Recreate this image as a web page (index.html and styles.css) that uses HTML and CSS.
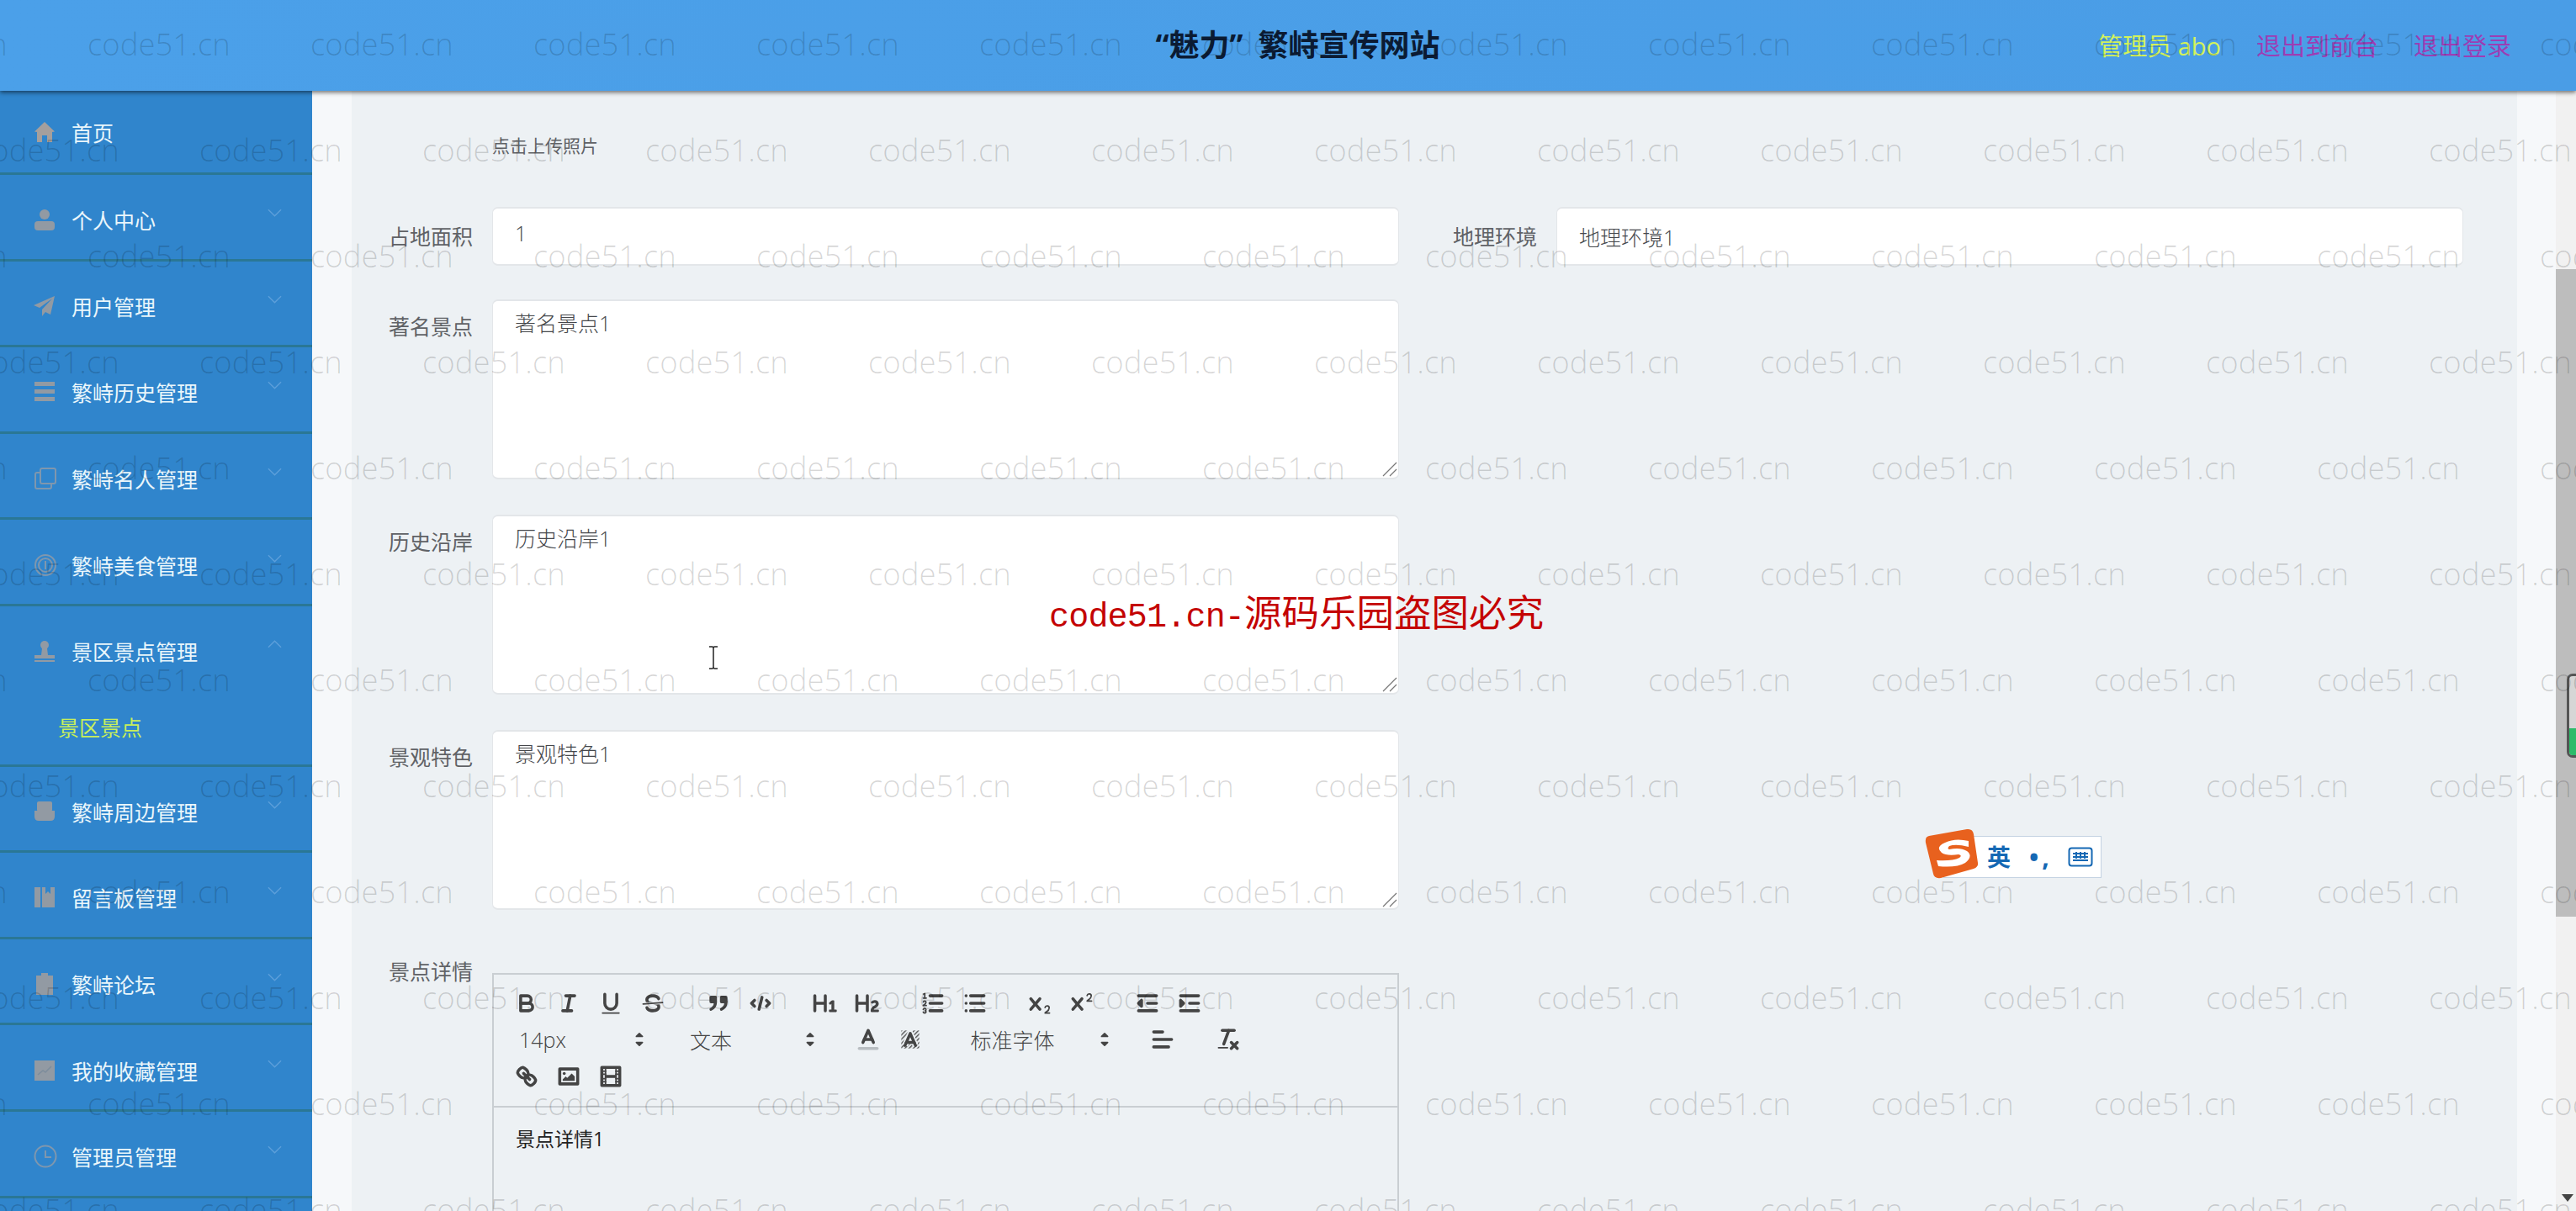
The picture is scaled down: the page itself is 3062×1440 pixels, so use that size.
FILE: index.html
```html
<!DOCTYPE html>
<html lang="zh-CN">
<head>
<meta charset="utf-8">
<title>“魅力”繁峙宣传网站</title>
<link rel="stylesheet" href="styles.css">
</head>
<body>
<div class="app">
  <header class="topbar">
    <div></div>
    <h1 class="site-title">“魅力<span class="title-quote">”</span>繁峙宣传网站</h1>
    <nav class="top-links">
      <span class="user-name">管理员 abo</span>
      <a class="top-link">退出到前台</a>
      <a class="top-link">退出登录</a>
    </nav>
  </header>
  <div class="shell">
    <aside class="sidebar">
      <ul class="menu">
        <li class="menu-item menu-item-first"><div class="menu-title">
          <svg class="nav-icon nav-icon-warm" viewBox="0 0 26 26"><path d="M13 1 25 12.500 22 13V25H16V17H10V25H4V13L1 12.500Z"/></svg><span>首页</span></div></li>
        <li class="menu-item"><div class="menu-title">
          <svg class="nav-icon" viewBox="0 0 26 26"><circle cx="13" cy="7" r="6"/><rect x="1" y="15" width="24" height="11" rx="4"/></svg><span>个人中心</span>
          <svg class="chevron" viewBox="0 0 18 10"><path d="M1 1 9 9 17 1"/></svg></div></li>
        <li class="menu-item"><div class="menu-title">
          <svg class="nav-icon" viewBox="0 0 26 26"><path d="M25 1 0 12 7 15 22 4 10 17V25L14 20 20 23Z"/></svg><span>用户管理</span>
          <svg class="chevron" viewBox="0 0 18 10"><path d="M1 1 9 9 17 1"/></svg></div></li>
        <li class="menu-item"><div class="menu-title">
          <svg class="nav-icon" viewBox="0 0 26 26"><rect x="1" y="1" width="24" height="5"/><rect x="1" y="10" width="24" height="5"/><rect x="1" y="19" width="24" height="5"/></svg><span>繁峙历史管理</span>
          <svg class="chevron" viewBox="0 0 18 10"><path d="M1 1 9 9 17 1"/></svg></div></li>
        <li class="menu-item"><div class="menu-title">
          <svg class="nav-icon nav-icon-line" viewBox="0 0 28 28"><rect x="8" y="2" width="18" height="18" rx="2"/><path d="M8 7H4Q2 7 2 9V24Q2 26 4 26H19Q21 26 21 24V20"/></svg><span>繁峙名人管理</span>
          <svg class="chevron" viewBox="0 0 18 10"><path d="M1 1 9 9 17 1"/></svg></div></li>
        <li class="menu-item"><div class="menu-title">
          <svg class="nav-icon nav-icon-line" viewBox="0 0 28 28"><circle cx="14" cy="14" r="12"/><circle cx="14" cy="14" r="8"/><path d="M14 9V19"/></svg><span>繁峙美食管理</span>
          <svg class="chevron" viewBox="0 0 18 10"><path d="M1 1 9 9 17 1"/></svg></div></li>
        <li class="menu-item menu-item-open"><div class="menu-title">
          <svg class="nav-icon" viewBox="0 0 26 26"><circle cx="13" cy="6" r="5"/><path d="M10 10H16L17 18H25V22H1V18H9Z"/><rect x="1" y="24" width="24" height="2"/></svg><span>景区景点管理</span>
          <svg class="chevron" viewBox="0 0 18 10"><path d="M1 9 9 1 17 9"/></svg></div>
          <div class="submenu-item">景区景点</div></li>
        <li class="menu-item"><div class="menu-title">
          <svg class="nav-icon" viewBox="0 0 26 26"><rect x="4" y="1" width="18" height="12" rx="2"/><path d="M1 12H25V19Q25 24 20 24H6Q1 24 1 19Z"/></svg><span>繁峙周边管理</span>
          <svg class="chevron" viewBox="0 0 18 10"><path d="M1 1 9 9 17 1"/></svg></div></li>
        <li class="menu-item"><div class="menu-title">
          <svg class="nav-icon" viewBox="0 0 26 26"><rect x="1" y="1" width="7" height="24"/><path d="M10 1H14V9L17 6 20 9V1H25V25H10Z"/></svg><span>留言板管理</span>
          <svg class="chevron" viewBox="0 0 18 10"><path d="M1 1 9 9 17 1"/></svg></div></li>
        <li class="menu-item"><div class="menu-title">
          <svg class="nav-icon" viewBox="0 0 26 26"><path d="M9 0H17V3H23V26H3V3H9Z"/></svg><span>繁峙论坛</span>
          <svg class="chevron" viewBox="0 0 18 10"><path d="M1 1 9 9 17 1"/></svg></div></li>
        <li class="menu-item"><div class="menu-title">
          <svg class="nav-icon" viewBox="0 0 26 26"><rect x="1" y="1" width="24" height="24"/><path class="nav-icon-cut" d="M5 18 11 13 14 15 21 8"/></svg><span>我的收藏管理</span>
          <svg class="chevron" viewBox="0 0 18 10"><path d="M1 1 9 9 17 1"/></svg></div></li>
        <li class="menu-item"><div class="menu-title">
          <svg class="nav-icon nav-icon-line" viewBox="0 0 28 28"><circle cx="14" cy="14" r="12.500"/><path d="M14 7V15H21"/></svg><span>管理员管理</span>
          <svg class="chevron" viewBox="0 0 18 10"><path d="M1 1 9 9 17 1"/></svg></div></li>
      </ul>
    </aside>
    <div class="strip"></div>
    <main class="content">
      <div class="upload-row"><span class="upload-text">点击上传照片</span></div>
      <form class="form">
        <div class="field field-input">
          <label class="field-label">占地面积</label>
          <input class="control control-first" value="1">
        </div>
        <div class="field field-input">
          <label class="field-label">地理环境</label>
          <input class="control" value="地理环境1">
        </div>
        <div class="field field-area">
          <label class="field-label">著名景点</label>
          <div class="area-wrap">
            <textarea class="control area">著名景点1</textarea>
            <svg class="grip" viewBox="0 0 18 18"><path d="M1 17 17 1M9 17 17 9"/></svg>
          </div>
        </div>
        <div class="field field-area field-second">
          <label class="field-label">历史沿岸</label>
          <div class="area-wrap">
            <textarea class="control area">历史沿岸1</textarea>
            <svg class="grip" viewBox="0 0 18 18"><path d="M1 17 17 1M9 17 17 9"/></svg>
          </div>
        </div>
        <div class="field field-area field-second">
          <label class="field-label">景观特色</label>
          <div class="area-wrap">
            <textarea class="control area">景观特色1</textarea>
            <svg class="grip" viewBox="0 0 18 18"><path d="M1 17 17 1M9 17 17 9"/></svg>
          </div>
        </div>
        <div class="field field-editor">
          <label class="field-label field-label-editor">景点详情</label>
          <div class="editor">
            <div class="toolbar">
              <div class="tb-row">
              <span class="tb-group">
                <span class="tb-btn"><svg viewBox="0 0 18 18"><path class="ql-stroke" d="M5,4H9.500A2.500,2.500,0,0,1,12,6.500v0A2.500,2.500,0,0,1,9.500,9H5A0,0,0,0,1,5,9V4A0,0,0,0,1,5,4Z"/><path class="ql-stroke" d="M5,9h5.500A2.500,2.500,0,0,1,13,11.500v0A2.500,2.500,0,0,1,10.500,14H5a0,0,0,0,1,0,0V9A0,0,0,0,1,5,9Z"/></svg></span>
                <span class="tb-btn"><svg viewBox="0 0 18 18"><line class="ql-stroke" x1="7" x2="13" y1="4" y2="4"/><line class="ql-stroke" x1="5" x2="11" y1="14" y2="14"/><line class="ql-stroke" x1="8" x2="10" y1="14" y2="4"/></svg></span>
                <span class="tb-btn"><svg viewBox="0 0 18 18"><path class="ql-stroke" d="M5,3V9a4.012,4.012,0,0,0,4,4H9a4.012,4.012,0,0,0,4-4V3"/><rect class="ql-fill" height="1" rx=".5" ry=".5" width="12" x="3" y="15"/></svg></span>
                <span class="tb-btn"><svg viewBox="0 0 18 18"><line class="ql-stroke ql-thin" x1="15.500" x2="2.500" y1="8.500" y2="9.500"/><path class="ql-fill" d="M9.007,8C6.542,7.791,6,7.519,6,6.500,6,5.792,7.283,5,9,5c1.571,0,2.765.679,2.969,1.309a1,1,0,0,0,1.900-.617C13.356,4.106,11.354,3,9,3,6.200,3,4,4.538,4,6.500a3.200,3.200,0,0,0,.5,1.843Z"/><path class="ql-fill" d="M8.984,10C11.457,10.208,12,10.479,12,11.500c0,.708-1.283,1.500-3,1.500-1.571,0-2.765-.679-2.969-1.309a1,1,0,1,0-1.900.617C4.644,13.894,6.646,15,9,15c2.800,0,5-1.538,5-3.500a3.200,3.200,0,0,0-.5-1.843Z"/></svg></span>
              </span>
              <span class="tb-group">
                <span class="tb-btn"><svg viewBox="0 0 18 18"><rect class="ql-fill ql-stroke" height="3" width="3" x="4" y="5"/><rect class="ql-fill ql-stroke" height="3" width="3" x="11" y="5"/><path class="ql-stroke" d="M7,8c0,4.031-3,5-3,5"/><path class="ql-stroke" d="M14,8c0,4.031-3,5-3,5"/></svg></span>
                <span class="tb-btn"><svg viewBox="0 0 18 18"><polyline class="ql-stroke" points="5 7 3 9 5 11"/><polyline class="ql-stroke" points="13 7 15 9 13 11"/><line class="ql-stroke" x1="10" x2="8" y1="5" y2="13"/></svg></span>
              </span>
              <span class="tb-group">
                <span class="tb-btn"><svg viewBox="0 0 18 18"><path class="ql-fill" d="M10,4V14a1,1,0,0,1-2,0V10H3v4a1,1,0,0,1-2,0V4A1,1,0,0,1,3,4V8H8V4a1,1,0,0,1,2,0Zm6.06787,9.209H14.98975V7.59863a.54085.54085,0,0,0-.605-.60547h-.62744a1.01119,1.01119,0,0,0-.748.29688L11.645,8.56641a.5435.5435,0,0,0-.022.8584l.28613.30762a.53861.53861,0,0,0,.84717.0332l.09912-.08789a1.2137,1.2137,0,0,0,.2417-.35254h.02246s-.01123.30859-.01123.60547V13.209H12.041a.54085.54085,0,0,0-.605.60547v.43945a.54085.54085,0,0,0,.605.60547h4.02686a.54085.54085,0,0,0,.605-.60547v-.43945A.54085.54085,0,0,0,16.06787,13.209Z"/></svg></span>
                <span class="tb-btn"><svg viewBox="0 0 18 18"><path class="ql-fill" d="M16.73975,13.81445v.43945a.54085.54085,0,0,1-.605.60547H11.855a.58392.58392,0,0,1-.64893-.60547V14.0127c0-2.90527,3.39941-3.42187,3.39941-4.55469a.77675.77675,0,0,0-.84717-.78125,1.17684,1.17684,0,0,0-.83594.38477c-.2749.26367-.561.374-.85791.13184l-.4292-.34082c-.30811-.24219-.38525-.51758-.1543-.81445a2.97155,2.97155,0,0,1,2.45361-1.17676,2.45393,2.45393,0,0,1,2.68408,2.40918c0,2.45312-3.1792,2.92676-3.27832,3.93848h2.79443A.54085.54085,0,0,1,16.73975,13.81445ZM9,3A.99974.99974,0,0,0,8,4V8H3V4A1,1,0,0,0,1,4V14a1,1,0,0,0,2,0V10H8v4a1,1,0,0,0,2,0V4A.99974.99974,0,0,0,9,3Z"/></svg></span>
              </span>
              <span class="tb-group">
                <span class="tb-btn"><svg viewBox="0 0 18 18"><line class="ql-stroke" x1="7" x2="15" y1="4" y2="4"/><line class="ql-stroke" x1="7" x2="15" y1="9" y2="9"/><line class="ql-stroke" x1="7" x2="15" y1="14" y2="14"/><line class="ql-stroke ql-thin" x1="2.500" x2="4.500" y1="5.500" y2="5.500"/><path class="ql-fill" d="M3.500,6A0.500,0.500,0,0,1,3,5.500V3.085l-0.276.138A0.500,0.500,0,0,1,2.053,3c-0.124-.247-0.023-0.324.224-0.447l1-.5A0.500,0.500,0,0,1,4,2.500v3A0.500,0.500,0,0,1,3.500,6Z"/><path class="ql-stroke ql-thin" d="M4.500,10.500h-2c0-.234,1.850-1.076,1.850-2.234A0.959,0.959,0,0,0,2.500,8.156"/><path class="ql-stroke ql-thin" d="M2.500,14.846a0.959,0.959,0,0,0,1.850-.109A0.700,0.700,0,0,0,3.750,14a0.688,0.688,0,0,0,.6-0.736,0.959,0.959,0,0,0-1.850-.109"/></svg></span>
                <span class="tb-btn"><svg viewBox="0 0 18 18"><line class="ql-stroke" x1="6" x2="15" y1="4" y2="4"/><line class="ql-stroke" x1="6" x2="15" y1="9" y2="9"/><line class="ql-stroke" x1="6" x2="15" y1="14" y2="14"/><line class="ql-stroke" x1="3" x2="3" y1="4" y2="4"/><line class="ql-stroke" x1="3" x2="3" y1="9" y2="9"/><line class="ql-stroke" x1="3" x2="3" y1="14" y2="14"/></svg></span>
              </span>
              <span class="tb-group">
                <span class="tb-btn"><svg viewBox="0 0 18 18"><path class="ql-fill" d="M15.500,15H13.861a3.858,3.858,0,0,0,1.914-2.975,1.800,1.800,0,0,0-1.600-1.751A1.921,1.921,0,0,0,12.021,11.700a0.50013,0.50013,0,1,0,.957.291h0a0.914,0.914,0,0,1,1.053-.725,0.810,0.810,0,0,1,.744.762c0,1.076-1.16971,1.86982-1.93971,2.43082A1.45639,1.45639,0,0,0,12,15.500a0.500,0.500,0,0,0,.5.5h3A0.500,0.500,0,0,0,15.500,15Z"/><path class="ql-fill" d="M9.650,5.241a1,1,0,0,0-1.409.108L6,7.964,3.759,5.349A1,1,0,0,0,2.192,6.59178Q2.21541,6.6213,2.241,6.649L4.684,9.500,2.241,12.350A1,1,0,0,0,3.710,13.70722q0.02557-.02768.049-0.05722L6,11.036,8.241,13.650a1,1,0,1,0,1.567-1.24277Q9.78459,12.3777,9.759,12.350L7.316,9.500,9.759,6.651A1,1,0,0,0,9.650,5.241Z"/></svg></span>
                <span class="tb-btn"><svg viewBox="0 0 18 18"><path class="ql-fill" d="M15.500,7H13.861a4.015,4.015,0,0,0,1.914-2.975,1.800,1.800,0,0,0-1.600-1.751A1.922,1.922,0,0,0,12.021,3.700a0.500,0.500,0,1,0,.957.291,0.917,0.917,0,0,1,1.053-.725,0.810,0.810,0,0,1,.744.762c0,1.077-1.164,1.925-1.934,2.486A1.423,1.423,0,0,0,12,7.500a0.500,0.500,0,0,0,.5.5h3A0.500,0.500,0,0,0,15.500,7Z"/><path class="ql-fill" d="M9.650,5.241a1,1,0,0,0-1.409.108L6,7.964,3.759,5.349A1,1,0,0,0,2.192,6.59178Q2.21541,6.6213,2.241,6.649L4.684,9.500,2.241,12.350A1,1,0,0,0,3.710,13.70722q0.02557-.02768.049-0.05722L6,11.036,8.241,13.650a1,1,0,1,0,1.567-1.24277Q9.78459,12.3777,9.759,12.350L7.316,9.500,9.759,6.651A1,1,0,0,0,9.650,5.241Z"/></svg></span>
              </span>
              <span class="tb-group">
                <span class="tb-btn"><svg viewBox="0 0 18 18"><line class="ql-stroke" x1="3" x2="15" y1="14" y2="14"/><line class="ql-stroke" x1="3" x2="15" y1="4" y2="4"/><line class="ql-stroke" x1="9" x2="15" y1="9" y2="9"/><polyline class="ql-fill ql-stroke" points="5 7 5 11 3 9 5 7"/></svg></span>
                <span class="tb-btn"><svg viewBox="0 0 18 18"><line class="ql-stroke" x1="3" x2="15" y1="14" y2="14"/><line class="ql-stroke" x1="3" x2="15" y1="4" y2="4"/><line class="ql-stroke" x1="9" x2="15" y1="9" y2="9"/><polyline class="ql-fill ql-stroke" points="3 7 3 11 5 9 3 7"/></svg></span>
              </span>
              </div>
              <div class="tb-row">
              <span class="tb-picker tb-picker-size"><span>14px</span><svg viewBox="0 0 18 18"><polygon class="ql-fill ql-stroke-thin" points="7 11 9 13 11 11 7 11"/><polygon class="ql-fill ql-stroke-thin" points="7 7 9 5 11 7 7 7"/></svg></span>
              <span class="tb-picker tb-picker-size"><span>文本</span><svg viewBox="0 0 18 18"><polygon class="ql-fill ql-stroke-thin" points="7 11 9 13 11 11 7 11"/><polygon class="ql-fill ql-stroke-thin" points="7 7 9 5 11 7 7 7"/></svg></span>
              <span class="tb-group">
                <span class="tb-btn"><svg viewBox="0 0 18 18"><line class="ql-stroke ql-label" x1="3" x2="15" y1="15" y2="15"/><polyline class="ql-stroke" points="5.500 11 9 3 12.500 11"/><line class="ql-stroke" x1="11.630" x2="6.380" y1="9" y2="9"/></svg></span>
                <span class="tb-btn"><svg viewBox="0 0 18 18"><defs><pattern id="hatch" width="2" height="2" patternUnits="userSpaceOnUse" patternTransform="rotate(45)"><rect class="hatch-line" width=".8" height="2"/></pattern></defs><rect x="3" y="3" width="12" height="12" fill="url(#hatch)"/><polyline class="ql-halo" points="5.500 13 9 5 12.500 13"/><polyline class="ql-stroke" points="5.500 13 9 5 12.500 13"/><line class="ql-stroke" x1="11.630" x2="6.380" y1="11" y2="11"/></svg></span>
              </span>
              <span class="tb-picker tb-picker-font"><span>标准字体</span><svg viewBox="0 0 18 18"><polygon class="ql-fill ql-stroke-thin" points="7 11 9 13 11 11 7 11"/><polygon class="ql-fill ql-stroke-thin" points="7 7 9 5 11 7 7 7"/></svg></span>
              <span class="tb-group">
                <span class="tb-btn"><svg viewBox="0 0 18 18"><line class="ql-stroke" x1="3" x2="15" y1="9" y2="9"/><line class="ql-stroke" x1="3" x2="13" y1="14" y2="14"/><line class="ql-stroke" x1="3" x2="9" y1="4" y2="4"/></svg></span>
              </span>
              <span class="tb-group">
                <span class="tb-btn"><svg viewBox="0 0 18 18"><line class="ql-stroke" x1="5" x2="13" y1="3" y2="3"/><line class="ql-stroke" x1="6" x2="9.350" y1="12" y2="3"/><line class="ql-stroke" x1="11" x2="15" y1="11" y2="15"/><line class="ql-stroke" x1="15" x2="11" y1="11" y2="15"/><rect class="ql-fill" height="1" rx=".5" ry=".5" width="7" x="2" y="14"/></svg></span>
              </span>
              </div>
              <div class="tb-row">
              <span class="tb-group">
                <span class="tb-btn"><svg viewBox="0 0 18 18"><line class="ql-stroke" x1="7" x2="11" y1="7" y2="11"/><path class="ql-stroke" d="M8.900,4.577a3.476,3.476,0,0,1,.36,4.679A3.476,3.476,0,0,1,4.577,8.900C3.185,7.500,2.035,6.400,4.217,4.217S7.500,3.185,8.900,4.577Z"/><path class="ql-stroke" d="M13.423,9.100a3.476,3.476,0,0,0-4.679-.36,3.476,3.476,0,0,0,.36,4.679c1.392,1.392,2.500,2.542,4.679.36S14.815,10.500,13.423,9.100Z"/></svg></span>
                <span class="tb-btn"><svg viewBox="0 0 18 18"><rect class="ql-stroke" height="10" width="12" x="3" y="4"/><circle class="ql-fill" cx="6" cy="7" r="1"/><polyline class="ql-fill" points="5 12 5 11 7 9 8 10 11 7 13 9 13 12 5 12"/></svg></span>
                <span class="tb-btn"><svg viewBox="0 0 18 18"><rect class="ql-stroke" height="12" width="12" x="3" y="3"/><rect class="ql-fill" height="12" width="1" x="5" y="3"/><rect class="ql-fill" height="12" width="1" x="12" y="3"/><rect class="ql-fill" height="2" width="8" x="5" y="8"/><rect class="ql-fill" height="1" width="3" x="3" y="5"/><rect class="ql-fill" height="1" width="3" x="3" y="7"/><rect class="ql-fill" height="1" width="3" x="3" y="10"/><rect class="ql-fill" height="1" width="3" x="3" y="12"/><rect class="ql-fill" height="1" width="3" x="12" y="5"/><rect class="ql-fill" height="1" width="3" x="12" y="7"/><rect class="ql-fill" height="1" width="3" x="12" y="10"/><rect class="ql-fill" height="1" width="3" x="12" y="12"/></svg></span>
              </span>
              </div>
            </div>
            <div class="editor-body">景点详情1</div>
          </div>
        </div>
      </form>
    </main>
    <div class="strip strip-right"></div>
    <div class="scrollbar">
      <div class="scroll-thumb">
        <div class="battery"><div class="battery-fill"></div></div>
      </div>
      <svg class="scroll-arrow" viewBox="0 0 14 9"><path d="M0 0H14L7 9Z"/></svg>
    </div>
  </div>
</div>

<div class="watermarks">
  <div class="wm-row wm-row-a"><span>code51.cn</span><span>code51.cn</span><span>code51.cn</span><span>code51.cn</span><span>code51.cn</span><span>code51.cn</span><span>code51.cn</span><span>code51.cn</span><span>code51.cn</span><span>code51.cn</span><span>code51.cn</span><span>code51.cn</span><span>code51.cn</span></div>
  <div class="wm-row wm-row-b"><span>code51.cn</span><span>code51.cn</span><span>code51.cn</span><span>code51.cn</span><span>code51.cn</span><span>code51.cn</span><span>code51.cn</span><span>code51.cn</span><span>code51.cn</span><span>code51.cn</span><span>code51.cn</span><span>code51.cn</span><span>code51.cn</span></div>
  <div class="wm-row wm-row-a"><span>code51.cn</span><span>code51.cn</span><span>code51.cn</span><span>code51.cn</span><span>code51.cn</span><span>code51.cn</span><span>code51.cn</span><span>code51.cn</span><span>code51.cn</span><span>code51.cn</span><span>code51.cn</span><span>code51.cn</span><span>code51.cn</span></div>
  <div class="wm-row wm-row-b"><span>code51.cn</span><span>code51.cn</span><span>code51.cn</span><span>code51.cn</span><span>code51.cn</span><span>code51.cn</span><span>code51.cn</span><span>code51.cn</span><span>code51.cn</span><span>code51.cn</span><span>code51.cn</span><span>code51.cn</span><span>code51.cn</span></div>
  <div class="wm-row wm-row-a"><span>code51.cn</span><span>code51.cn</span><span>code51.cn</span><span>code51.cn</span><span>code51.cn</span><span>code51.cn</span><span>code51.cn</span><span>code51.cn</span><span>code51.cn</span><span>code51.cn</span><span>code51.cn</span><span>code51.cn</span><span>code51.cn</span></div>
  <div class="wm-row wm-row-b"><span>code51.cn</span><span>code51.cn</span><span>code51.cn</span><span>code51.cn</span><span>code51.cn</span><span>code51.cn</span><span>code51.cn</span><span>code51.cn</span><span>code51.cn</span><span>code51.cn</span><span>code51.cn</span><span>code51.cn</span><span>code51.cn</span></div>
  <div class="wm-row wm-row-a"><span>code51.cn</span><span>code51.cn</span><span>code51.cn</span><span>code51.cn</span><span>code51.cn</span><span>code51.cn</span><span>code51.cn</span><span>code51.cn</span><span>code51.cn</span><span>code51.cn</span><span>code51.cn</span><span>code51.cn</span><span>code51.cn</span></div>
  <div class="wm-row wm-row-b"><span>code51.cn</span><span>code51.cn</span><span>code51.cn</span><span>code51.cn</span><span>code51.cn</span><span>code51.cn</span><span>code51.cn</span><span>code51.cn</span><span>code51.cn</span><span>code51.cn</span><span>code51.cn</span><span>code51.cn</span><span>code51.cn</span></div>
  <div class="wm-row wm-row-a"><span>code51.cn</span><span>code51.cn</span><span>code51.cn</span><span>code51.cn</span><span>code51.cn</span><span>code51.cn</span><span>code51.cn</span><span>code51.cn</span><span>code51.cn</span><span>code51.cn</span><span>code51.cn</span><span>code51.cn</span><span>code51.cn</span></div>
  <div class="wm-row wm-row-b"><span>code51.cn</span><span>code51.cn</span><span>code51.cn</span><span>code51.cn</span><span>code51.cn</span><span>code51.cn</span><span>code51.cn</span><span>code51.cn</span><span>code51.cn</span><span>code51.cn</span><span>code51.cn</span><span>code51.cn</span><span>code51.cn</span></div>
  <div class="wm-row wm-row-a"><span>code51.cn</span><span>code51.cn</span><span>code51.cn</span><span>code51.cn</span><span>code51.cn</span><span>code51.cn</span><span>code51.cn</span><span>code51.cn</span><span>code51.cn</span><span>code51.cn</span><span>code51.cn</span><span>code51.cn</span><span>code51.cn</span></div>
  <div class="wm-row wm-row-b"><span>code51.cn</span><span>code51.cn</span><span>code51.cn</span><span>code51.cn</span><span>code51.cn</span><span>code51.cn</span><span>code51.cn</span><span>code51.cn</span><span>code51.cn</span><span>code51.cn</span><span>code51.cn</span><span>code51.cn</span><span>code51.cn</span></div>
</div>

<div class="stamp"><span class="stamp-latin">code51.cn-</span>源码乐园盗图必究</div>

<svg class="ibeam" viewBox="0 0 12 28"><path d="M1 1H4.500Q6 1 6 3V25Q6 27 4.500 27H1M11 1H7.500Q6 1 6 3M6 25Q6 27 7.500 27H11"/></svg>

<div class="ime">
  <svg class="ime-logo" viewBox="0 0 64 60"><path class="ime-logo-box" d="M5 9 50 1Q57 0 58 7L63 41Q64 46 58 48L19 59Q11 60 10 54L1 17Q0 10 5 9Z"/><path class="ime-logo-s" d="M52 15Q36 11 24 17 12 22 20 29 26 33 40 31 45 32 41 35 33 39 14 38L16 45Q38 47 48 41 58 33 50 27 42 22 29 25 26 24 29 21 37 18 52 22Z"/></svg>
  <span class="ime-text">英</span>
  <span class="ime-punct">•,</span>
  <svg class="ime-keys" viewBox="0 0 30 24"><rect x="1.500" y="1.500" width="27" height="21" rx="3"/><path d="M6 8H24M6 12H24M6 16H24M10 6V14M15 6V14M20 6V14"/></svg>
</div>
</body>
</html>
```
FILE: styles.css
```css
* { box-sizing: border-box; }
html, body { margin: 0; height: 100%; overflow: hidden; }
body {
  font-family: "Open Sans", "Noto Sans CJK SC", sans-serif;
  color: #606266;
  background: #edf1f4;
}
.app { display: flex; flex-direction: column; height: 1440px; }

/* top bar */
.topbar {
  position: relative;
  z-index: 3;
  flex: none;
  height: 108px;
  display: grid;
  grid-template-columns: 1fr auto 1fr;
  align-items: center;
  padding-right: 77px;
  background: linear-gradient(100deg, #4ba0e9, #4a9de6);
  box-shadow: 0 2px 5px rgba(0, 0, 0, .55);
}
.site-title {
  margin: 0;
  padding-left: 100px;
  font-size: 36px;
  font-weight: 700;
  line-height: 106px;
  color: #0b1b33;
  white-space: nowrap;
}
.title-quote { margin-right: 18px; }
.top-links {
  display: flex;
  justify-content: flex-end;
  align-items: center;
  gap: 42px;
  padding-bottom: 3px;
  font-size: 29px;
}
.user-name { color: #d2f25c; }
.top-link { color: #9c3db4; }

/* layout */
.shell { flex: 1; display: flex; min-height: 0; }
.sidebar { flex: none; width: 371px; background: #3085cc; color: #eaf6fb; overflow: hidden; }
.strip { flex: none; width: 47px; background: #f6f8fa; }
.strip-right { width: 46px; }
.content { flex: 1; min-width: 0; overflow: hidden; padding: 0 64px 0 44px; background: #edf1f4; }

/* sidebar menu */
.menu { margin: 0; padding: 0; list-style: none; font-size: 25px; }
.menu-item { border-bottom: 3px solid #2a7795; }
.menu-title {
  display: flex;
  align-items: center;
  gap: 19px;
  height: 99.600px;
  padding: 7px 36px 0 40px;
}
.menu-item-first .menu-title { height: 97px; padding-top: 0; }
.nav-icon { flex: none; width: 26px; height: 30px; fill: #929aa3; }
.nav-icon-warm { fill: #a49f9d; }
.nav-icon-line { fill: none; stroke: #7f97ae; stroke-width: 2; height: 28px; width: 28px; margin-right: -2px; }
.nav-icon-cut { fill: none; stroke: #7d8d9c; stroke-width: 1.500; }
.chevron {
  flex: none;
  width: 17px;
  height: 10px;
  margin-left: auto;
  margin-bottom: 16px;
  fill: none;
  stroke: #5c9fda;
  stroke-width: 1.500;
}
.submenu-item {
  height: 88px;
  padding-left: 69px;
  line-height: 88px;
  color: #c8ef5a;
}

/* form */
.upload-row { height: 138px; padding: 50px 0 0 123px; }
.upload-text { font-size: 21px; line-height: 30px; }
.form {
  display: grid;
  grid-template-columns: 1fr 1fr;
  column-gap: 64px;
}
.field { display: flex; align-items: flex-start; gap: 23px; }
.field-input { height: 110px; }
.field-area { grid-column: 1; height: 256px; }
.field-second { height: 256px; }
.field-label {
  flex: none;
  width: 101px;
  margin-left: -1px;
  font-size: 25px;
  line-height: 71px;
  white-space: nowrap;
  text-align: right;
}
.field-area .field-label { line-height: 64px; }
.control {
  flex: 1;
  min-width: 0;
  height: 70px;
  padding: 0 26px;
  border: 1px solid #e3e6e9;
  border-top-width: 2px;
  border-bottom-width: 2px;
  border-radius: 7px;
  background: #fff;
  font: 300 25px "Open Sans", "Noto Sans CJK SC", sans-serif;
  color: #45474b;
  outline: none;
}
.control-first { padding-bottom: 8px; }
.area-wrap { position: relative; flex: 1; min-width: 0; height: 214px; }
.area { display: block; width: 100%; height: 214px; padding-top: 9px; line-height: 34px; resize: none; }
.grip { position: absolute; right: 2px; bottom: 3px; width: 18px; height: 18px; fill: none; stroke: #777; stroke-width: 1.200; }
.field-editor { grid-column: 1; margin-top: 33px; }
.field-label-editor { margin-top: -37px; }

/* editor */
.editor { flex: 1; min-width: 0; height: 400px; border: solid #c9ced2; border-width: 2px; color: #444; }
.toolbar {
  display: flex;
  flex-direction: column;
  height: 158px;
  padding: 12px 14px 14px;
  border-bottom: 2px solid #c9ced2;
}
.tb-row { display: flex; column-gap: 27.500px; }
.tb-group { display: flex; }
.tb-btn { display: flex; align-items: center; justify-content: center; width: 50px; height: 43.500px; }
.tb-btn svg { width: 32px; height: 32px; }
.tb-picker {
  display: flex;
  align-items: center;
  justify-content: space-between;
  height: 43.500px;
  padding-left: 16px;
  font-size: 25px;
  font-weight: 300;
}
.tb-picker svg { width: 32px; height: 32px; margin-right: 1px; }
.tb-picker-size { width: 175.500px; }
.tb-picker-font { width: 195px; padding-left: 19px; }
.ql-stroke { fill: none; stroke: #444; stroke-width: 2; stroke-linecap: round; stroke-linejoin: round; }
.ql-fill { fill: #444; }
.ql-fill.ql-stroke { fill: #444; }
.ql-thin { stroke-width: 1; }
.ql-stroke-thin { stroke: #444; stroke-width: 1; stroke-linejoin: round; }
.ql-label { stroke: #b9bec2; }
.ql-halo { fill: none; stroke: #edf1f4; stroke-width: 4; }
.hatch-line { fill: #555; }
.editor-body { padding: 20px 26px; font-size: 23px; line-height: 34px; color: #222; }

/* page scrollbar */
.scrollbar {
  position: relative;
  flex: none;
  display: flex;
  flex-direction: column;
  width: 24px;
  padding-top: 212px;
  background: #f1f1f1;
}
.scroll-thumb { position: relative; height: 770px; background: #bdbdbd; }
.battery {
  position: absolute;
  top: 481px;
  left: 13px;
  width: 20px;
  height: 100px;
  border: 3px solid #555;
  border-radius: 7px;
  overflow: hidden;
  background: #d6d6d6;
}
.battery-fill { margin-top: 62px; height: 35px; background: #2dbb6a; }
.scroll-arrow { position: absolute; right: 3px; bottom: 11px; width: 14px; height: 9px; fill: #444; }

/* overlays */
.watermarks {
  position: absolute;
  z-index: 5;
  top: -11px;
  left: 0;
  width: 3062px;
  height: 1451px;
  overflow: hidden;
  pointer-events: none;
  font-family: "Open Sans", sans-serif;
  font-weight: 300;
  font-size: 36.500px;
  color: rgba(0, 0, 0, .16);
}
.wm-row { display: flex; height: 126px; align-items: center; white-space: nowrap; }
.wm-row span { flex: none; width: 265px; }
.wm-row-a { margin-left: -161px; }
.wm-row-b { margin-left: -28px; }
.stamp {
  position: absolute;
  z-index: 6;
  top: 703px;
  left: 1247px;
  font-family: "Liberation Mono", "Noto Sans CJK SC", monospace;
  font-size: 44.500px;
  line-height: 60px;
  white-space: nowrap;
  color: #c40404;
}
.stamp-latin { font-size: 40px; letter-spacing: -.800px; }
.ibeam {
  position: absolute;
  z-index: 6;
  top: 768px;
  left: 842px;
  width: 12px;
  height: 28px;
  fill: none;
  stroke: #222;
  stroke-width: 1.500;
}
.ime {
  position: absolute;
  z-index: 6;
  top: 994px;
  left: 2310px;
  display: flex;
  align-items: center;
  width: 188px;
  height: 50px;
  padding-left: 51px;
  border: 1px solid #c5d3e2;
  background: #fff;
  color: #1568b4;
}
.ime-logo { position: absolute; top: -10px; left: -23px; width: 64px; height: 60px; }
.ime-logo-box { fill: #e8611e; }
.ime-logo-s { fill: #fff; }
.ime-text { font-size: 28px; font-weight: 700; line-height: 1; }
.ime-punct { margin-left: 22px; font-size: 30px; font-weight: 700; line-height: 1; letter-spacing: 4px; }
.ime-keys { margin-left: 18px; width: 30px; height: 24px; fill: none; stroke: #1568b4; stroke-width: 2; }
```
